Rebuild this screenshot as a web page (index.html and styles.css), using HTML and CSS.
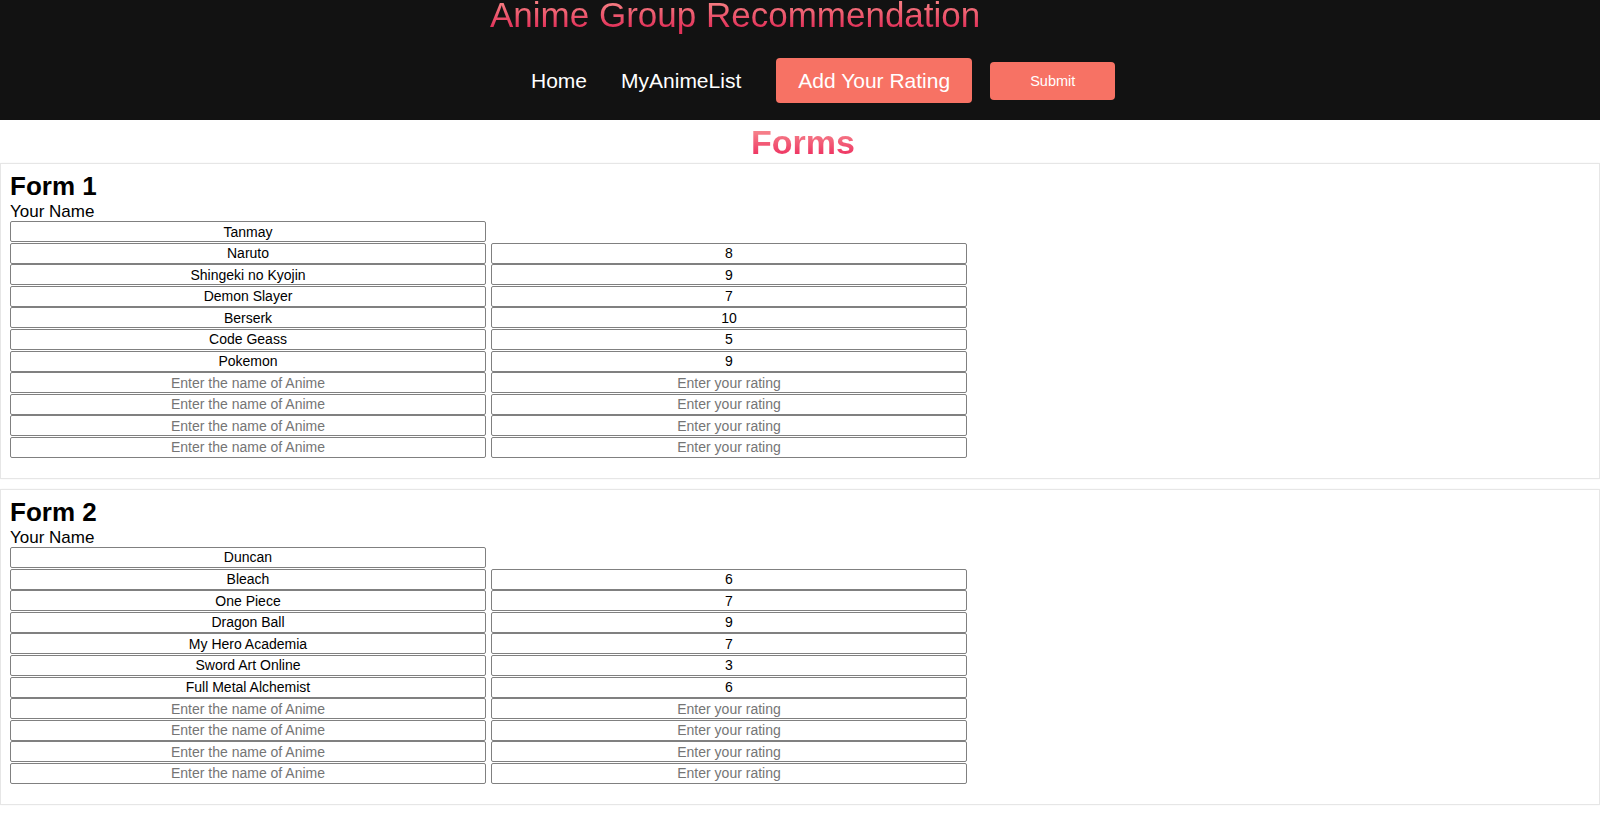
FILE: index.html
```html
<!DOCTYPE html>
<html lang="en">
<head>
<meta charset="utf-8">
<title>Anime Group Recommendation</title>
<link rel="stylesheet" href="styles.css">
</head>
<body>
<header class="topbar">
  <h1 class="site-title">Anime Group Recommendation</h1>
  <nav class="nav">
    <a class="nav-link" href="#">Home</a>
    <a class="nav-link" href="#">MyAnimeList</a>
    <a class="nav-btn" href="#">Add Your Rating</a>
    <button class="submit-btn" type="button">Submit</button>
  </nav>
</header>
<h2 class="page-title">Forms</h2>

<form class="rating-form">
  <h3 class="form-title">Form 1</h3>
  <label class="name-label">Your Name</label>
  <div class="rows">
    <div class="row"><input class="field" type="text" value="Tanmay"></div>
    <div class="row"><input class="field" type="text" value="Naruto"><input class="field" type="text" value="8"></div>
    <div class="row"><input class="field" type="text" value="Shingeki no Kyojin"><input class="field" type="text" value="9"></div>
    <div class="row"><input class="field" type="text" value="Demon Slayer"><input class="field" type="text" value="7"></div>
    <div class="row"><input class="field" type="text" value="Berserk"><input class="field" type="text" value="10"></div>
    <div class="row"><input class="field" type="text" value="Code Geass"><input class="field" type="text" value="5"></div>
    <div class="row"><input class="field" type="text" value="Pokemon"><input class="field" type="text" value="9"></div>
    <div class="row"><input class="field" type="text" placeholder="Enter the name of Anime"><input class="field" type="text" placeholder="Enter your rating"></div>
    <div class="row"><input class="field" type="text" placeholder="Enter the name of Anime"><input class="field" type="text" placeholder="Enter your rating"></div>
    <div class="row"><input class="field" type="text" placeholder="Enter the name of Anime"><input class="field" type="text" placeholder="Enter your rating"></div>
    <div class="row"><input class="field" type="text" placeholder="Enter the name of Anime"><input class="field" type="text" placeholder="Enter your rating"></div>
  </div>
</form>

<form class="rating-form">
  <h3 class="form-title">Form 2</h3>
  <label class="name-label">Your Name</label>
  <div class="rows">
    <div class="row"><input class="field" type="text" value="Duncan"></div>
    <div class="row"><input class="field" type="text" value="Bleach"><input class="field" type="text" value="6"></div>
    <div class="row"><input class="field" type="text" value="One Piece"><input class="field" type="text" value="7"></div>
    <div class="row"><input class="field" type="text" value="Dragon Ball"><input class="field" type="text" value="9"></div>
    <div class="row"><input class="field" type="text" value="My Hero Academia"><input class="field" type="text" value="7"></div>
    <div class="row"><input class="field" type="text" value="Sword Art Online"><input class="field" type="text" value="3"></div>
    <div class="row"><input class="field" type="text" value="Full Metal Alchemist"><input class="field" type="text" value="6"></div>
    <div class="row"><input class="field" type="text" placeholder="Enter the name of Anime"><input class="field" type="text" placeholder="Enter your rating"></div>
    <div class="row"><input class="field" type="text" placeholder="Enter the name of Anime"><input class="field" type="text" placeholder="Enter your rating"></div>
    <div class="row"><input class="field" type="text" placeholder="Enter the name of Anime"><input class="field" type="text" placeholder="Enter your rating"></div>
    <div class="row"><input class="field" type="text" placeholder="Enter the name of Anime"><input class="field" type="text" placeholder="Enter your rating"></div>
  </div>
</form>
</body>
</html>
```

FILE: styles.css
```css
* {
  box-sizing: border-box;
}

body {
  margin: 0;
  font-family: "Liberation Sans", Arial, sans-serif;
  color: #000;
  background: #fff;
}

.topbar {
  height: 120px;
  background: #121212;
  display: flex;
  flex-direction: column;
  align-items: flex-start;
}

.site-title {
  margin: 0 0 0 490px;
  padding-bottom: 6px;
  font-size: 35px;
  line-height: 30px;
  font-weight: normal;
  background: linear-gradient(to bottom, #f67a80 10%, #e2335a 75%);
  -webkit-background-clip: text;
  background-clip: text;
  color: transparent;
}

.nav {
  display: flex;
  align-items: center;
  margin: 22px 0 0 531px;
}

.nav-link {
  color: #fff;
  text-decoration: none;
  font-size: 21px;
  line-height: 24px;
  margin-right: 34px;
}

.nav-link + .nav-link {
  margin-right: 35px;
}

.nav-btn {
  display: block;
  width: 196px;
  height: 45px;
  line-height: 45px;
  text-align: center;
  background: #f77264;
  color: #fff;
  text-decoration: none;
  font-size: 21px;
  border-radius: 4px;
  margin-right: 18px;
}

.submit-btn {
  width: 125px;
  height: 38px;
  margin-top: 1px;
  border: none;
  border-radius: 4px;
  background: #f77264;
  color: #fff;
  font-family: "Liberation Sans", Arial, sans-serif;
  font-size: 14.5px;
  padding: 0;
}

.page-title {
  margin: 3px auto 1px;
  text-align: center;
  font-size: 34px;
  font-weight: bold;
  background: linear-gradient(to bottom, #f6848c 20%, #ee3060 85%);
  -webkit-background-clip: text;
  background-clip: text;
  color: transparent;
  width: fit-content;
  position: relative;
  left: 3px;
}

.rating-form {
  border: 1px solid #e6e6e6;
  box-shadow: 0 0 2px rgba(0, 0, 0, 0.05);
  padding: 7px 9px 20px;
  margin: 0 0 10px;
}

.form-title {
  margin: 0;
  font-size: 26px;
  font-weight: bold;
}

.name-label {
  display: block;
  font-size: 17px;
  line-height: 19px;
}

.rows {
  display: flex;
  flex-direction: column;
  gap: 0.6px;
}

.row {
  display: flex;
  gap: 5px;
}

.field {
  width: 476px;
  height: 21px;
  padding: 0 2px;
  border: 1px solid #808080;
  border-radius: 2px;
  font-family: "Liberation Sans", Arial, sans-serif;
  font-size: 14px;
  color: #000;
  text-align: center;
  background: #fff;
}

.field::placeholder {
  color: #757575;
}
```
